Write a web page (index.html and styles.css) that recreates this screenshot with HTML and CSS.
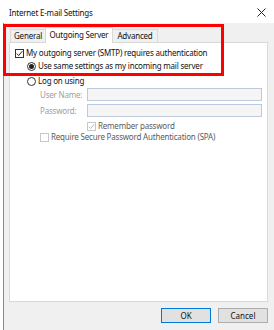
FILE: index.html
```html
<!DOCTYPE html>
<html>
<head>
<meta charset="utf-8">
<link rel="stylesheet" href="styles.css">
</head>
<body>
<div class="window">
  <div class="titlebar">
    <span class="title">Internet E-mail Settings</span>
    <svg class="close" width="9" height="9" viewBox="0 0 9 9"><path d="M0.5 0.5L8.5 8.5M8.5 0.5L0.5 8.5" stroke="#222" stroke-width="1" fill="none"/></svg>
  </div>
  <div class="dialog">
    <div class="tabs">
      <div class="tab t-general">General</div>
      <div class="tab t-out active">Outgoing Server</div>
      <div class="tab t-adv">Advanced</div>
    </div>
    <div class="panel">
      <div class="row r1">
        <span class="cb"><svg width="7" height="7" viewBox="0 0 7 7"><path d="M0.8 3.6L2.7 5.5L6.3 1.2" stroke="#222" stroke-width="1" fill="none"/></svg></span>
        <span>My outgoing server (SMTP) requires authentication</span>
      </div>
      <div class="row r2">
        <span class="radio on"></span>
        <span>Use same settings as my incoming mail server</span>
      </div>
      <div class="row r3">
        <span class="radio"></span>
        <span>Log on using</span>
      </div>
      <div class="field f-user">
        <span class="lbl">User Name:</span>
        <span class="input"></span>
      </div>
      <div class="field f-pass">
        <span class="lbl">Password:</span>
        <span class="input"></span>
      </div>
      <div class="row remember dis">
        <span class="cb dis"><svg width="7" height="7" viewBox="0 0 7 7"><path d="M0.8 3.6L2.7 5.5L6.3 1.2" stroke="#b8b8b8" stroke-width="1" fill="none"/></svg></span>
        <span>Remember password</span>
      </div>
      <div class="row spa dis">
        <span class="cb dis"></span>
        <span>Require Secure Password Authentication (SPA)</span>
      </div>
    </div>
    <div class="buttons">
      <button class="btn default">OK</button>
      <button class="btn">Cancel</button>
    </div>
  </div>
  <div class="highlight"></div>
</div>
</body>
</html>
```
FILE: styles.css
```css
html, body {
  margin: 0;
  padding: 0;
}
body {
  width: 274px;
  height: 330px;
  overflow: hidden;
  background: #ffffff;
  font-family: "Noto Sans", "Open Sans", sans-serif;
  font-size: 8px;
  letter-spacing: -0.2px;
  color: #111;
}
.window {
  position: relative;
  height: 330px;
}
.titlebar {
  height: 23px;
  box-sizing: border-box;
  padding: 2px 8px 0 9px;
  display: flex;
  align-items: center;
  justify-content: space-between;
}
.title {
  font-size: 8px;
  color: #111;
}
.close {
  display: block;
}
.dialog {
  margin-left: 3px;
  border-left: 1px solid #8a8a8a;
  background: #f0f0f0;
  height: 307px;
  box-sizing: border-box;
  padding: 4px 6px 0 5px;
  display: flex;
  flex-direction: column;
}
.tabs {
  display: flex;
  align-items: flex-end;
  height: 16px;
  padding-left: 1px;
  position: relative;
  z-index: 1;
  margin-bottom: -1px;
}
.tab {
  box-sizing: border-box;
  height: 13px;
  margin-bottom: 1px;
  border: 1px solid #d9d9d9;
  border-bottom: none;
  background: #f0f0f0;
  display: flex;
  align-items: center;
  justify-content: center;
  line-height: 1;
}
.tab + .tab {
  margin-left: -1px;
}
.t-general { width: 36px; }
.t-out { width: 68px; }
.t-adv { width: 46px; }
.tab.active {
  height: 16px;
  margin-bottom: 0;
  background: #ffffff;
  position: relative;
  z-index: 2;
  padding-bottom: 2px;
}
.panel {
  box-sizing: border-box;
  height: 260px;
  background: #ffffff;
  border: 1px solid #d9d9d9;
  padding: 4px 0 0 5px;
}
.row {
  display: flex;
  align-items: center;
  height: 12px;
  gap: 2px;
  line-height: 1;
  white-space: nowrap;
}
.r2 { margin-top: 1px; margin-left: 12px; }
.r3 { margin-top: 3px; margin-left: 12px; }
.cb {
  box-sizing: border-box;
  width: 9px;
  height: 9px;
  border: 1px solid #333;
  background: #fff;
  display: flex;
  align-items: center;
  justify-content: center;
  flex: none;
}
.cb svg { display: block; }
.cb.dis { border-color: #c8c8c8; }
.radio {
  box-sizing: border-box;
  width: 9px;
  height: 9px;
  border: 1px solid #333;
  border-radius: 50%;
  background: #fff;
  flex: none;
  display: flex;
  align-items: center;
  justify-content: center;
}
.radio.on::after {
  content: "";
  width: 5px;
  height: 5px;
  border-radius: 50%;
  background: #222;
}
.field {
  display: flex;
  align-items: center;
  height: 13px;
  padding-left: 25px;
}
.f-user { margin-top: 1px; }
.f-pass { margin-top: 3px; }
.lbl {
  width: 47px;
  color: #a0a0a0;
  line-height: 1;
}
.input {
  box-sizing: border-box;
  width: 175px;
  height: 13px;
  border: 1px solid #bccadb;
  background: #f5f5f5;
}
.row.dis { color: #5c5c5c; }
.remember { margin-top: 3px; padding-left: 72px; }
.spa { margin-top: -1px; padding-left: 25px; }
.buttons {
  display: flex;
  justify-content: flex-end;
  gap: 7px;
  margin-top: 6px;
}
.btn {
  box-sizing: border-box;
  width: 50px;
  height: 15px;
  border: 1px solid #adadad;
  background: #e1e1e1;
  font-family: "Noto Sans", "Open Sans", sans-serif;
  font-size: 8px;
  color: #111;
  padding: 0;
  line-height: 1;
}
.btn.default {
  border-color: #0078d7;
}
.highlight {
  position: absolute;
  left: 3px;
  top: 24px;
  width: 221px;
  height: 52px;
  box-sizing: border-box;
  border: 3px solid #ff0000;
  pointer-events: none;
}
```
